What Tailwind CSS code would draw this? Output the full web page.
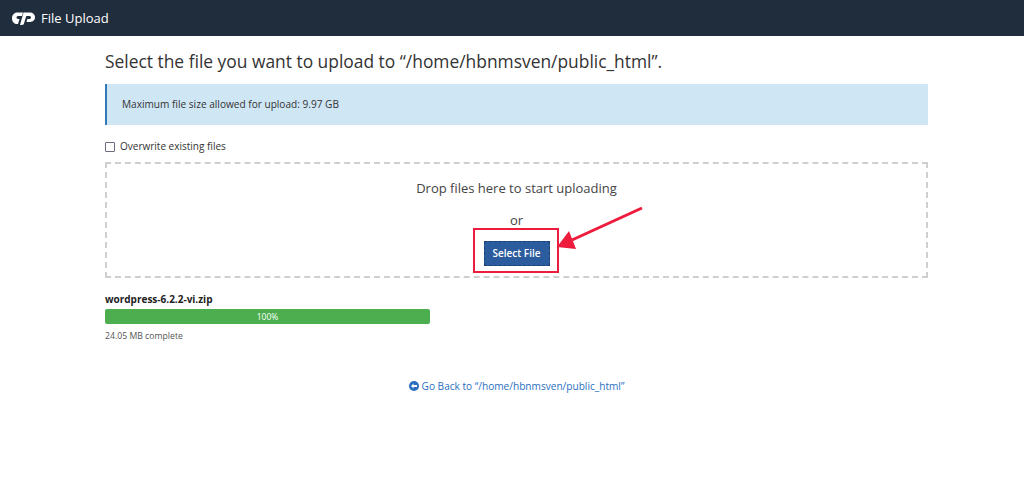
<!DOCTYPE html>
<html lang="en">
<head>
  <meta charset="UTF-8">
  <meta name="viewport" content="width=device-width, initial-scale=1.0">
  <title>File Upload</title>
  <script src="https://cdn.jsdelivr.net/npm/@tailwindcss/browser@4"></script>
</head>
<body class="bg-white font-['Open_Sans',sans-serif] text-[#333] min-h-screen">
  <!-- Header -->
  <header class="h-9 bg-[#1f2d3d] flex items-center pl-3 text-white">
    <svg width="23" height="14" viewBox="0 0 23 14" class="mr-[6px]" fill="#fff">
      <path d="M5 1.500H11L10 5H6C4 5 4 8 6 8H7.500L6 13H5C1.800 13 0 10.300 0 7.200 0 4 2.300 1.500 5 1.500z"/>
      <path d="M8 14L11.500 1.500H18C21 1.500 23 3.700 23 6.300 23 9 21 11 18 11H14.500L15.300 8H17.500C19.500 8 19.500 5 17.500 5H14.300L11.800 13C11.500 13.800 10.500 14 8 14z"/>
    </svg>
    <span class="text-[13px] leading-none">File Upload</span>
  </header>

  <main class="relative ml-[105px] w-[823px]">
    <h1 class="text-[17.4px] leading-[24px] pt-[13px] text-[#333]">Select the file you want to upload to “/home/hbnmsven/public_html”.</h1>

    <div class="mt-[11px] h-[41px] bg-[#cfe6f5] border-l-2 border-[#337ab7] pl-[15px] flex items-center text-[10.1px] text-[#333]">
      Maximum file size allowed for upload: 9.97 GB
    </div>

    <label class="mt-[15px] flex items-center text-[10px] leading-[12px] text-[#333]">
      <span class="w-[10px] h-[10px] mt-[2px] mr-[5px] border border-[#6f6a80] rounded-[1px] bg-white"></span>
      Overwrite existing files
    </label>

    <!-- Zona de upload -->
    <div class="mt-[10px] h-[116px] border-2 border-dashed border-[#cfcfcf] flex flex-col items-center text-[#444]">
      <p class="mt-[15px] text-[13px] leading-[18px]">Drop files here to start uploading</p>
      <p class="mt-[15px] text-[13px] leading-[16px]">or</p>
      <div class="mr-[2px] w-[86px] h-[45px] border-2 border-[#ed1c3c] pl-[9px] pt-[11px]">
        <button class="block w-[66px] h-[25px] bg-[#2a5c9e] border border-dashed border-[#1b3f70] text-white text-[10px] font-semibold">Select File</button>
      </div>
    </div>

    <!-- Progresso -->
    <p class="mt-[14px] text-[10px] leading-[14px] font-bold text-[#222]">wordpress-6.2.2-vi.zip</p>
    <div class="mt-[3px] w-[325px] h-[15px] rounded-[2px] bg-[#4cae4f] text-white text-[8.5px] leading-[15px] text-center">100%</div>
    <p class="mt-[6px] text-[8.7px] leading-[12px] text-[#555]">24.05 MB complete</p>

    <a class="mt-[37px] flex items-center justify-center text-[10.1px] leading-[14px] text-[#2a6fbf]">
      <svg width="10" height="10" viewBox="0 0 10 10" class="mr-[3px]">
        <circle cx="5" cy="5" r="5" fill="#2a6fbf"/>
        <path d="M2 5l2.500-2.500v1.500H8v2H4.500v1.500z" fill="#fff"/>
      </svg>
      Go Back to “/home/hbnmsven/public_html”
    </a>

    <!-- Seta vermelha por cima do conteudo -->
    <svg class="absolute left-[440px] top-[160px] pointer-events-none" width="110" height="60" viewBox="0 0 110 60">
      <path d="M97 12L27 44" stroke="#ed1c3c" stroke-width="3" fill="none"/>
      <path d="M12 51L24 35L31 53z" fill="#ed1c3c"/>
    </svg>
  </main>
</body>
</html>
